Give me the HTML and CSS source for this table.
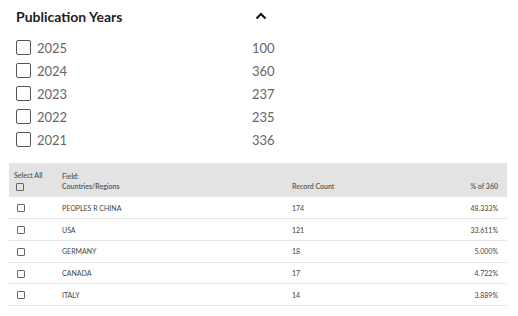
FILE: index.html
```html
<!DOCTYPE html>
<html>
<head>
<meta charset="utf-8">
<link rel="stylesheet" href="styles.css">
</head>
<body>
<section class="facet">
  <div class="facet-head">
    <h2 class="facet-title">Publication Years</h2>
    <svg class="chevron" width="12" height="8" viewBox="0 0 12 8"><path d="M1.5 6.5 L6 2 L10.5 6.5" fill="none" stroke="#111" stroke-width="2.2"/></svg>
  </div>
  <ul class="years">
    <li class="year"><span class="box"></span><span class="yl">2025</span><span class="yc">100</span></li>
    <li class="year"><span class="box"></span><span class="yl">2024</span><span class="yc">360</span></li>
    <li class="year"><span class="box"></span><span class="yl">2023</span><span class="yc">237</span></li>
    <li class="year"><span class="box"></span><span class="yl">2022</span><span class="yc">235</span></li>
    <li class="year"><span class="box"></span><span class="yl">2021</span><span class="yc">336</span></li>
  </ul>
</section>
<table class="results">
  <thead>
    <tr>
      <th class="c-sel"><div>Select All</div><span class="sbox"></span></th>
      <th class="c-field"><div>Field:</div><div>Countries/Regions</div></th>
      <th class="c-count">Record Count</th>
      <th class="c-pct">% of 360</th>
    </tr>
  </thead>
  <tbody>
    <tr><td class="c-sel"><span class="sbox"></span></td><td class="c-field">PEOPLES R CHINA</td><td class="c-count">174</td><td class="c-pct">48.333%</td></tr>
    <tr><td class="c-sel"><span class="sbox"></span></td><td class="c-field">USA</td><td class="c-count">121</td><td class="c-pct">33.611%</td></tr>
    <tr><td class="c-sel"><span class="sbox"></span></td><td class="c-field">GERMANY</td><td class="c-count">18</td><td class="c-pct">5.000%</td></tr>
    <tr><td class="c-sel"><span class="sbox"></span></td><td class="c-field">CANADA</td><td class="c-count">17</td><td class="c-pct">4.722%</td></tr>
    <tr><td class="c-sel"><span class="sbox"></span></td><td class="c-field">ITALY</td><td class="c-count">14</td><td class="c-pct">3.889%</td></tr>
  </tbody>
</table>
</body>
</html>
```
FILE: styles.css
```css
* { box-sizing: border-box; }
body {
  margin: 0;
  background: #fff;
  font-family: "Lato", "Noto Sans", sans-serif;
  color: #333;
}
.facet {
  padding: 6px 16px 0 16px;
}
.facet-head {
  display: flex;
  align-items: center;
  height: 20px;
}
.facet-title {
  margin: 0;
  width: 239px;
  font-size: 14px;
  font-weight: 700;
  color: #222;
}
.chevron { display: block; }
.years {
  list-style: none;
  margin: 10px 0 0 0;
  padding: 0;
}
.year {
  display: flex;
  align-items: center;
  height: 23px;
}
.box {
  width: 15px;
  height: 15px;
  border: 1.5px solid #555;
  border-radius: 2px;
  flex: none;
}
.yl {
  margin-left: 6px;
  width: 215px;
  font-size: 13px;
  color: #666;
}
.yc {
  font-size: 13px;
  color: #666;
}
.results {
  margin: 12px 0 0 9px;
  width: 498px;
  border-collapse: collapse;
  font-size: 7px;
  color: #444;
}
.results th {
  background: #e3e3e3;
  font-weight: 600;
  text-align: left;
  vertical-align: bottom;
  padding: 7px 5px 6px 5px;
  line-height: 10px;
  height: 34px;
  color: #555;
}
.results td {
  height: 21.7px;
  padding: 0 5px;
  border-bottom: 1px solid #e6e6e6;
}
.c-sel { width: 48px; }
.c-field { width: 230px; }
.results td.c-sel { padding-left: 8px; }
.c-count { width: 170px; }
.results .c-pct { text-align: right; padding-right: 9px; }
.sbox {
  display: inline-block;
  width: 8px;
  height: 8px;
  border: 1px solid #666;
  border-radius: 1px;
  vertical-align: middle;
}
.results th .sbox { margin: 1px 0 0 2px; }
```
